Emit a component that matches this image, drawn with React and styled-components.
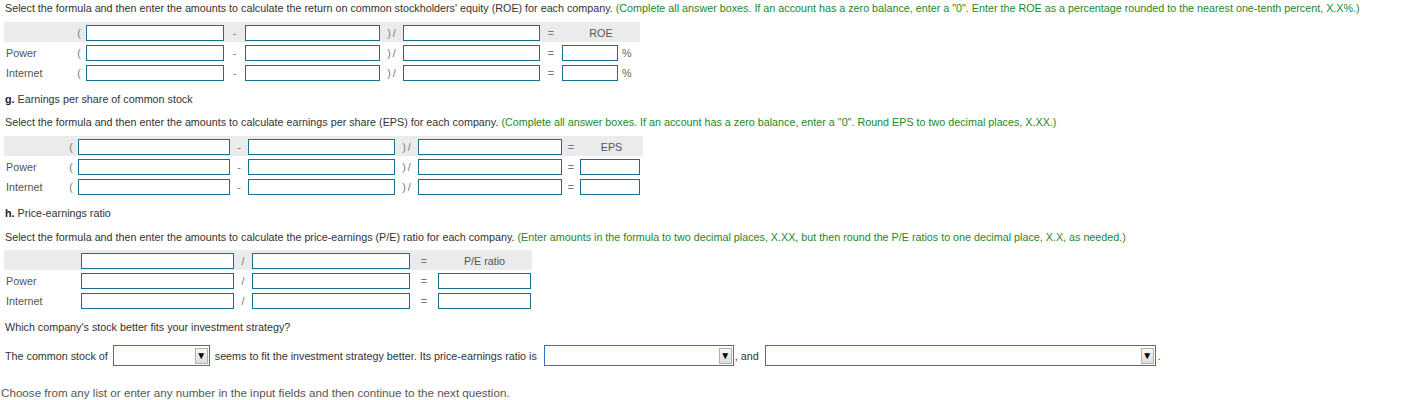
import React from 'react'
import styled, { createGlobalStyle } from 'styled-components'

const GlobalStyle = createGlobalStyle`
	body {
		margin: 0;
		background: #fff;
		font-family: 'Liberation Sans', Arial, sans-serif;
		font-size: 10.75px;
		color: #333;
	}
`

const Page = styled.main`
	padding-left: 4px;
`

const Para = styled.p`
	margin: ${({ $top }) => $top || 0}px 0 0 0;
	padding-left: 1px;
	line-height: 16px;
	white-space: nowrap;

	b {
		font-weight: bold;
		color: #222;
	}
`

const Hint = styled.span`
	color: #1b8a1f;
`

const Table = styled.div`
	margin-top: ${({ $top }) => $top}px;
	width: max-content;
`

const Row = styled.div`
	display: grid;
	grid-template-columns: ${({ $cols }) => $cols};
	height: 20px;
	background: ${({ $head }) => ($head ? '#ebebeb' : 'transparent')};
`

const Label = styled.div`
	align-self: end;
	line-height: 17px;
	padding-left: 2px;
	color: #555;
`

const Sym = styled.div`
	align-self: end;
	line-height: 17px;
	text-align: center;
	color: #777;
`

const Field = styled.input`
	box-sizing: border-box;
	align-self: end;
	width: 100%;
	height: 16px;
	margin: 0 0 1px 0;
	padding: 0 2px;
	border: 1px solid #17708e;
	border-radius: 0;
	background: #fff;
	font: inherit;
	outline: none;
`

const HeadCell = styled.div`
	align-self: end;
	line-height: 17px;
	text-align: center;
	color: #555;
	grid-column: span ${({ $span }) => $span || 1};
`

const Unit = styled.div`
	align-self: end;
	line-height: 17px;
	padding-left: 4px;
	color: #666;
`

const AnswerLine = styled.div`
	display: flex;
	align-items: center;
	margin-top: 10px;
	height: 21px;
	padding-left: 1px;
	white-space: nowrap;
`

const Dropdown = styled.div`
	box-sizing: border-box;
	display: flex;
	justify-content: flex-end;
	align-items: center;
	width: ${({ $w }) => $w}px;
	height: 21px;
	margin: 0 ${({ $right }) => $right || 0}px 0 ${({ $left }) => $left || 0}px;
	border: 1px solid #3a6ec8;
	background: #fff;
`

const Arrow = styled.div`
	box-sizing: border-box;
	display: flex;
	align-items: center;
	justify-content: center;
	width: 13px;
	height: 16px;
	margin-right: 1px;
	border: 1px solid #b0b0b0;
	background: linear-gradient(#f6f6f6, #dedede);
	font-size: 10px;
	line-height: 1;
	color: #000;
`

const Footer = styled.p`
	margin: 19px 0 0 -3px;
	font-size: 11.65px;
	line-height: 16px;
	color: #555;
`

const roeCols = '68px 14px 138px 21px 135px 23px 137px 22px 56px 22px'
const epsCols = '60px 14px 152px 18px 147px 23px 144px 18px 60px 3px'
const peCols = '77px 153px 18px 158px 28px 93px 1px'

function ParenRow({ cols, label, head, title, unit }) {
	return (
		<Row $cols={cols} $head={head}>
			<Label>{label}</Label>
			<Sym>(</Sym>
			<Field />
			<Sym>-</Sym>
			<Field />
			<Sym>)&thinsp;/</Sym>
			<Field />
			<Sym>=</Sym>
			{head ? (
				<HeadCell $span={2}>{title}</HeadCell>
			) : (
				<>
					<Field />
					<Unit>{unit}</Unit>
				</>
			)}
		</Row>
	)
}

function RatioRow({ label, head }) {
	return (
		<Row $cols={peCols} $head={head}>
			<Label>{label}</Label>
			<Field />
			<Sym>/</Sym>
			<Field />
			<Sym>=</Sym>
			{head ? <HeadCell>P/E ratio</HeadCell> : <Field />}
			<div />
		</Row>
	)
}

function Select({ width, left, right }) {
	return (
		<Dropdown $w={width} $left={left} $right={right}>
			<Arrow>▼</Arrow>
		</Dropdown>
	)
}

export default function App() {
	return (
		<Page>
			<GlobalStyle />
			<Para>
				Select the formula and then enter the amounts to calculate the return on
				common stockholders' equity (ROE) for each company.{' '}
				<Hint>
					(Complete all answer boxes. If an account has a zero balance, enter a
					"0". Enter the ROE as a percentage rounded to the nearest one-tenth
					percent, X.X%.)
				</Hint>
			</Para>
			<Table $top={6}>
				<ParenRow cols={roeCols} head title="ROE" />
				<ParenRow cols={roeCols} label="Power" unit="%" />
				<ParenRow cols={roeCols} label="Internet" unit="%" />
			</Table>

			<Para $top={9}>
				<b>g.</b> Earnings per share of common stock
			</Para>
			<Para $top={7}>
				Select the formula and then enter the amounts to calculate earnings per
				share (EPS) for each company.{' '}
				<Hint>
					(Complete all answer boxes. If an account has a zero balance, enter a
					"0". Round EPS to two decimal places, X.XX.)
				</Hint>
			</Para>
			<Table $top={6}>
				<ParenRow cols={epsCols} head title="EPS" />
				<ParenRow cols={epsCols} label="Power" />
				<ParenRow cols={epsCols} label="Internet" />
			</Table>

			<Para $top={9}>
				<b>h.</b> Price-earnings ratio
			</Para>
			<Para $top={8}>
				Select the formula and then enter the amounts to calculate the
				price-earnings (P/E) ratio for each company.{' '}
				<Hint>
					(Enter amounts in the formula to two decimal places, X.XX, but then
					round the P/E ratios to one decimal place, X.X, as needed.)
				</Hint>
			</Para>
			<Table $top={5}>
				<RatioRow head />
				<RatioRow label="Power" />
				<RatioRow label="Internet" />
			</Table>

			<Para $top={9}>Which company's stock better fits your investment strategy?</Para>
			<AnswerLine>
				The common stock of
				<Select width={97} left={5} right={5} />
				seems to fit the investment strategy better. Its price-earnings ratio is
				<Select width={190} left={7} right={1} />
				, and
				<Select width={391} left={6} right={2} />.
			</AnswerLine>

			<Footer>
				Choose from any list or enter any number in the input fields and then
				continue to the next question.
			</Footer>
		</Page>
	)
}
